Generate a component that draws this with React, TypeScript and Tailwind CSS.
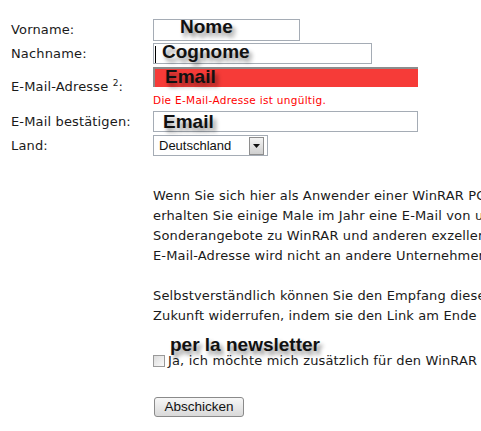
const shadow = '[text-shadow:3px_4px_4px_rgba(0,0,0,0.45)]';

const Note = ({ text, className }: { text: string; className: string }) => (
  <span
    className={`absolute whitespace-nowrap font-['Liberation_Sans',Arial,sans-serif] text-[19px] font-bold leading-none tracking-normal text-[#111] ${shadow} ${className}`}
  >
    {text}
  </span>
);

const Row = ({ label, children, className = '' }: { label: React.ReactNode; children: React.ReactNode; className?: string }) => (
  <div className={`flex items-center ${className}`}>
    <div className="w-[153px] shrink-0 pl-[11px]">{label}</div>
    <div>{children}</div>
  </div>
);

const paragraph1 = [
  'Wenn Sie sich hier als Anwender einer WinRAR PC-Version registrieren,',
  'erhalten Sie einige Male im Jahr eine E-Mail von uns mit Informationen über',
  'Sonderangebote zu WinRAR und anderen exzellenten Produkten. Ihre',
  'E-Mail-Adresse wird nicht an andere Unternehmen weitergegeben.',
];

const paragraph2 = [
  'Selbstverständlich können Sie den Empfang dieser E-Mails jederzeit für die',
  'Zukunft widerrufen, indem sie den Link am Ende der E-Mail anklicken.',
];

export default function App() {
  return (
    <div className="h-[431px] w-[481px] overflow-hidden bg-white font-['DejaVu_Sans',Verdana,sans-serif] text-[13px] tracking-[0.15px] text-[#1a1a1a]">
      <div className="pt-[19px]">
        <Row label="Vorname:">
          <div className="relative h-[22px] w-[147px] border border-[#a5acb5] bg-white">
            <Note text="Nome" className="left-[26px] top-[-3px]" />
          </div>
        </Row>

        <Row label="Nachname:" className="mt-[2px]">
          <div className="relative h-[21px] w-[219px] border border-[#a5acb5] bg-white">
            <span className="absolute left-[1px] top-[2px] h-[17px] w-px bg-black" />
            <Note text="Cognome" className="left-[8px] top-[-2px]" />
          </div>
        </Row>

        <Row
          label={
            <span>
              E-Mail-Adresse <sup className="text-[9px]">2</sup>:
            </span>
          }
          className="mt-[3px]"
        >
          <div className="relative h-[20px] w-[265px] border-l-2 border-t-2 border-[#8c8c8c] bg-[#f63b38]">
            <Note text="Email" className="left-[10px] top-[-2px]" />
          </div>
          <div className="mt-[7px] h-[12px] text-[10.5px] leading-[12px] tracking-[0.3px] text-[#ff0000]">
            Die E-Mail-Adresse ist ungültig.
          </div>
        </Row>

        <Row label="E-Mail bestätigen:" className="mt-[5px]">
          <div className="relative h-[21px] w-[265px] border border-[#a5acb5] bg-white">
            <Note text="Email" className="left-[9px] top-[0px]" />
          </div>
        </Row>

        <Row label="Land:" className="mt-[3px]">
          <div className="flex h-[21px] w-[115px] items-center justify-between border border-[#a5acb5] bg-white pl-[5px] pr-[3px]">
            <span className="font-['Liberation_Sans',Arial,sans-serif] text-[13px] leading-none tracking-normal text-[#111]">
              Deutschland
            </span>
            <span className="flex h-[18px] w-[15px] items-center justify-center border border-[#8e8e8e] bg-gradient-to-b from-[#f4f4f4] to-[#cfcfcf]">
              <svg width="7" height="4" viewBox="0 0 7 4">
                <path d="M0 0h7L3.5 4z" fill="#111" />
              </svg>
            </span>
          </div>
        </Row>
      </div>

      <div className="mt-[30px] pl-[153px] leading-[20px]">
        {paragraph1.map((line) => (
          <div key={line} className="whitespace-nowrap">
            {line}
          </div>
        ))}
        <div className="h-[20px]" />
        {paragraph2.map((line) => (
          <div key={line} className="whitespace-nowrap">
            {line}
          </div>
        ))}

        <div className="relative mt-[28px] flex items-center">
          <Note text="per la newsletter" className="left-[17px] top-[-19px]" />
          <span className="h-[12px] w-[12px] shrink-0 border border-[#9a9a9a] bg-gradient-to-br from-[#dcdcdc] to-[#fbfbfb]" />
          <span className="relative ml-[3px] whitespace-nowrap leading-[14px]">
            Ja, ich möchte mich zusätzlich für den WinRAR Newsletter anmelden.
          </span>
        </div>

        <button className="mt-[29px] ml-px flex h-[20px] w-[90px] items-center justify-center rounded-[3px] border border-[#8a8a8a] bg-gradient-to-b from-[#f7f7f7] to-[#d9d9d9] font-['Liberation_Sans',Arial,sans-serif] text-[13.5px] leading-none tracking-normal text-[#111]">
          Abschicken
        </button>
      </div>
    </div>
  );
}
